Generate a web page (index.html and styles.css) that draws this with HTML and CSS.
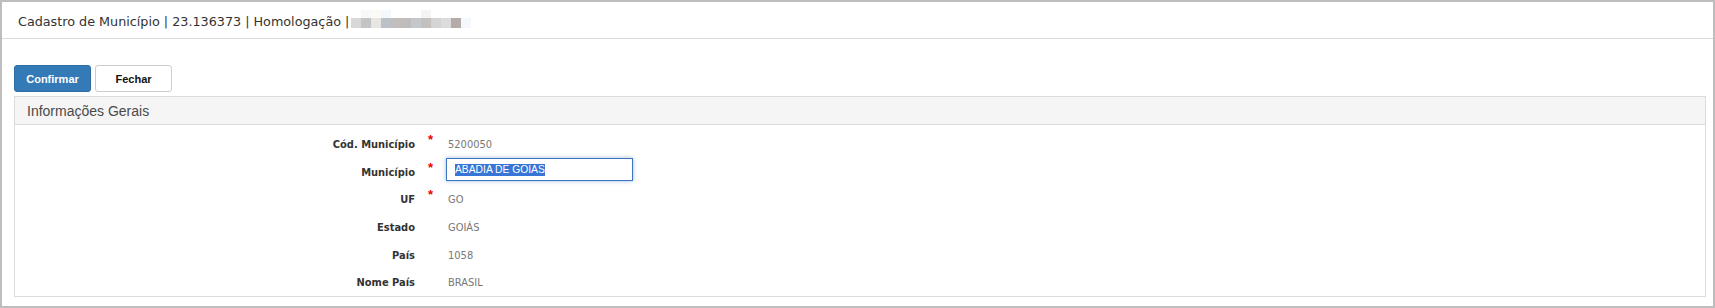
FILE: index.html
```html
<!DOCTYPE html>
<html lang="pt-BR">
<head>
<meta charset="utf-8">
<title>Cadastro de Município</title>
<link rel="stylesheet" href="styles.css">
</head>
<body>
<div class="frame">
  <div class="topbar">
    <span class="title">Cadastro de Município | 23.136373 | Homologação |</span>
    <span class="blur">
      <span class="blur-row faint">
        <i></i><i style="background:#f8f8f8"></i><i style="background:#fcfaf6"></i><i style="background:#f4f8fc"></i><i></i><i></i><i></i><i style="background:#f4f4f4"></i><i></i><i></i><i></i><i></i>
      </span>
      <span class="blur-row">
        <i style="background:#d8d8d8"></i><i style="background:#c4c4c4"></i><i style="background:#e8e6e2"></i><i style="background:#bcc0c8"></i><i style="background:#c2bebb"></i><i style="background:#c0bcbc"></i><i style="background:#c4c8cc"></i><i style="background:#c4c0c0"></i><i style="background:#d4d4d4"></i><i style="background:#dcdcdc"></i><i style="background:#b4aca8"></i><i style="background:#f4f8fc"></i>
      </span>
    </span>
  </div>
  <div class="content">
    <div class="actions">
      <button class="btn btn-primary">Confirmar</button>
      <button class="btn btn-default">Fechar</button>
    </div>
    <div class="panel">
      <div class="panel-heading">Informações Gerais</div>
      <div class="panel-body">
        <div class="row"><span class="label">Cód. Município</span><span class="req">*</span><span class="value">5200050</span></div>
        <div class="row"><span class="label">Município</span><span class="req">*</span><span class="value"><span class="input"><span class="sel">ABADIA DE GOIAS</span></span></span></div>
        <div class="row"><span class="label">UF</span><span class="req">*</span><span class="value">GO</span></div>
        <div class="row"><span class="label">Estado</span><span class="req"></span><span class="value">GOIÁS</span></div>
        <div class="row"><span class="label">País</span><span class="req"></span><span class="value">1058</span></div>
        <div class="row"><span class="label">Nome País</span><span class="req"></span><span class="value">BRASIL</span></div>
      </div>
    </div>
  </div>
</div>
</body>
</html>
```
FILE: styles.css
```css
html, body {
  margin: 0;
  padding: 0;
  background: #fff;
}
.frame {
  width: 1715px;
  height: 308px;
  box-sizing: border-box;
  border: 2px solid #bdbdbd;
  background: #fff;
}
.topbar {
  display: flex;
  align-items: center;
  padding-left: 16px;
  padding-top: 3px;
  box-sizing: border-box;
  height: 37px;
  border-bottom: 1px solid #d9d9d9;
}
.title {
  font-family: "DejaVu Sans", Verdana, sans-serif;
  font-size: 12.75px;
  color: #333;
}
.blur {
  display: flex;
  flex-direction: column;
  margin-left: 2px;
  margin-top: -6px;
}
.blur-row {
  display: flex;
  height: 10px;
}
.blur-row.faint {
  height: 8px;
}
.blur i {
  display: block;
  width: 10px;
  height: 100%;
}
.content {
  padding: 26px 7px 0 12px;
}
.actions {
  display: flex;
  gap: 4px;
  height: 27px;
}
.btn {
  width: 77px;
  height: 27px;
  box-sizing: border-box;
  border-radius: 3px;
  font-family: "Liberation Sans", Arial, sans-serif;
  font-weight: bold;
  font-size: 11px;
  padding: 0;
  margin: 0;
}
.btn-primary {
  background: #337ab7;
  border: 1px solid #2e6da4;
  color: #fff;
}
.btn-default {
  background: #fff;
  border: 1px solid #ccc;
  color: #111;
}
.panel {
  margin-top: 4px;
  border: 1px solid #dcdcdc;
  height: 201px;
  box-sizing: border-box;
}
.panel-heading {
  height: 27px;
  background: #f5f5f5;
  border-bottom: 1px solid #dcdcdc;
  display: flex;
  align-items: center;
  padding-left: 12px;
  font-family: "Liberation Sans", Arial, sans-serif;
  font-size: 14px;
  color: #4a4a4a;
}
.panel-body {
  padding-top: 6px;
}
.row {
  display: flex;
  align-items: center;
  height: 27.6px;
}
.label {
  width: 400px;
  text-align: right;
  font-family: "DejaVu Sans Condensed", "DejaVu Sans", sans-serif;
  font-weight: bold;
  font-size: 11px;
  color: #333;
}
.req {
  width: 33px;
  align-self: flex-start;
  padding-top: 2px;
  padding-left: 13px;
  box-sizing: border-box;
  color: #e00;
  font-family: "Liberation Sans", Arial, sans-serif;
  font-size: 13px;
  font-weight: bold;
  line-height: 13px;
}
.value {
  font-family: "DejaVu Sans Condensed", "DejaVu Sans", sans-serif;
  font-size: 11px;
  color: #777;
}
.input {
  display: flex;
  align-items: center;
  width: 187px;
  height: 23px;
  box-sizing: border-box;
  border: 1px solid #3b76bf;
  box-shadow: 0 0 4px rgba(60, 120, 200, 0.5);
  padding-left: 8px;
  margin-top: -5px;
  margin-left: -2px;
}
.sel {
  background: #3875d7;
  color: #fff;
  font-family: "Liberation Sans", Arial, sans-serif;
  font-size: 10.3px;
  line-height: 12px;
}
```
